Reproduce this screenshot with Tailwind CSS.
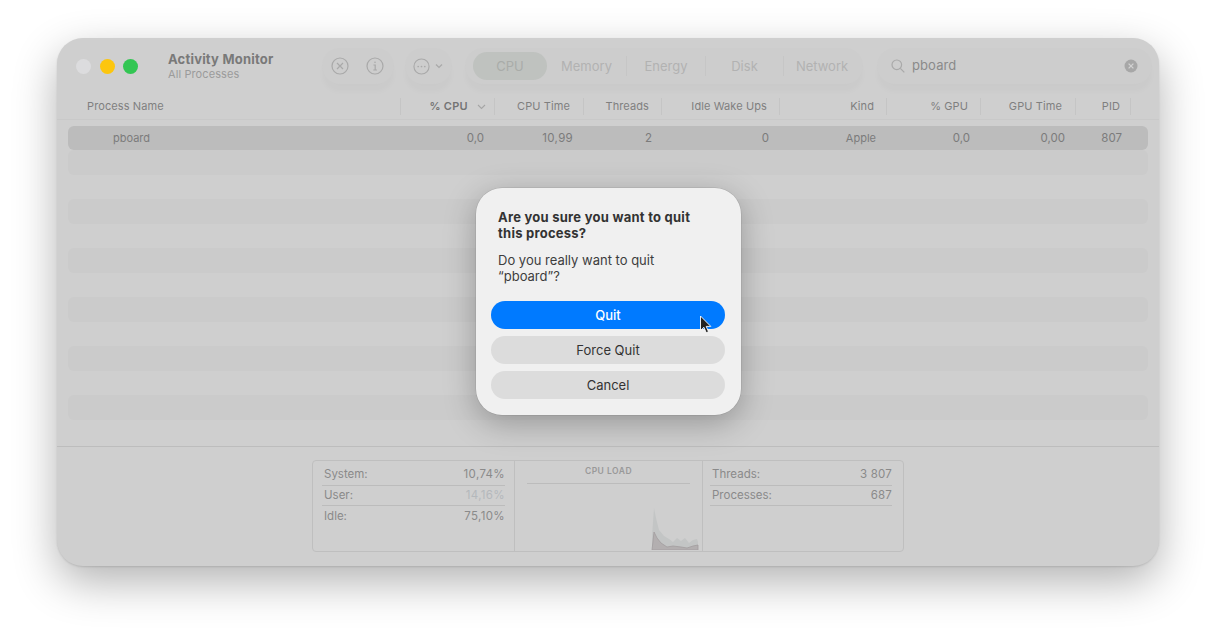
<!DOCTYPE html>
<html lang="en">
<head>
  <meta charset="UTF-8" />
  <title>Activity Monitor</title>
  <script src="https://cdn.jsdelivr.net/npm/@tailwindcss/browser@4"></script>
</head>
<body class="bg-white h-[641px] overflow-hidden font-['Inter',sans-serif] antialiased">
  <div class="relative ml-[57px] mt-[38px] w-[1102px] h-[528px] rounded-[26px] bg-[#cfcfcf] flex flex-col shadow-[0_1px_2px_rgba(0,0,0,0.12),0_16px_44px_rgba(0,0,0,0.3)]">

    <!-- Toolbar -->
    <div class="h-[56px] flex items-center pl-[19px] pr-[7px]">
      <div class="flex gap-[8.5px] w-[92px]">
        <span class="w-[15px] h-[15px] rounded-full bg-[#dcdcde]"></span>
        <span class="w-[15px] h-[15px] rounded-full bg-[#fcc60e]"></span>
        <span class="w-[15px] h-[15px] rounded-full bg-[#33c653]"></span>
      </div>
      <div class="w-[154px]">
        <div class="text-[13px] leading-[15px] font-bold text-[#797979] tracking-[0.2px]">Activity Monitor</div>
        <div class="text-[11px] leading-[14px] text-[#9b9b9b] tracking-[0.1px]">All Processes</div>
      </div>
      <div class="w-[72px] h-[36px] rounded-[18px] bg-[#cdcdcd] shadow-[0_8px_5px_rgba(0,0,0,0.02)] flex items-center justify-center gap-[17px] pr-[2px]">
        <svg width="18" height="18" viewBox="0 0 18 18" fill="none" stroke="#a9a9a9" stroke-width="1.2"><circle cx="9" cy="9" r="8"/><path d="M6 6l6 6M12 6l-6 6"/></svg>
        <svg width="18" height="18" viewBox="0 0 18 18" fill="none" stroke="#a9a9a9" stroke-width="1.2"><circle cx="9" cy="9" r="8"/><path d="M7.5 8h1.7v5M7.3 13h3.6"/><circle cx="9" cy="5.3" r="0.8" fill="#a9a9a9" stroke="none"/></svg>
      </div>
      <div class="w-[47px] h-[36px] ml-[11px] rounded-[18px] bg-[#cdcdcd] shadow-[0_8px_5px_rgba(0,0,0,0.02)] flex items-center justify-center gap-[5px] pr-[2px]">
        <svg width="17" height="17" viewBox="0 0 18 18" fill="none" stroke="#a9a9a9" stroke-width="1.2"><circle cx="9" cy="9" r="8"/><circle cx="5.5" cy="9" r="0.9" fill="#a9a9a9" stroke="none"/><circle cx="9" cy="9" r="0.9" fill="#a9a9a9" stroke="none"/><circle cx="12.5" cy="9" r="0.9" fill="#a9a9a9" stroke="none"/></svg>
        <svg width="8" height="6" viewBox="0 0 8 6" fill="none" stroke="#a9a9a9" stroke-width="1.2"><path d="M1 1.5l3 3 3-3"/></svg>
      </div>
      <div class="w-[398px] h-[36px] ml-[13px] rounded-[18px] bg-[#cdcdcd] shadow-[0_8px_5px_rgba(0,0,0,0.02)] flex items-center pl-[8px] text-[13px] leading-[20px] text-[#b2b2b2]">
        <span class="w-[74px] h-[28px] rounded-[14px] bg-[#bfc2bf] flex items-center justify-center text-[#a9aca9]">CPU</span>
        <span class="w-[80px] flex justify-center border-r border-[#c6c6c6]">Memory</span>
        <span class="w-[79px] flex justify-center border-r border-[#c6c6c6]">Energy</span>
        <span class="w-[78px] flex justify-center border-r border-[#c6c6c6]">Disk</span>
        <span class="w-[76px] flex justify-center">Network</span>
      </div>
      <div class="w-[275px] h-[36px] ml-[14px] rounded-[18px] bg-[#cdcdcd] shadow-[0_8px_5px_rgba(0,0,0,0.02)] flex items-center pl-[14px] pr-[14px] text-[13px] text-[#8a8a8a]">
        <svg width="14" height="14" viewBox="0 0 14 14" fill="none" stroke="#a9a9a9" stroke-width="1.2"><circle cx="5.8" cy="5.8" r="4.8"/><path d="M9.3 9.3l4 4"/></svg>
        <span class="ml-[7px] flex-1 tracking-[0.1px]">pboard</span>
        <svg width="14" height="14" viewBox="0 0 14 14"><circle cx="7" cy="7" r="6.5" fill="#a7a7a7"/><path d="M4.6 4.6l4.8 4.8M9.4 4.6l-4.8 4.8" stroke="#d2d2d2" stroke-width="1.3"/></svg>
      </div>
    </div>

    <!-- Column headers -->
    <div class="h-[26px] pl-[11px] flex items-center text-[11px] text-[#7f7f7f] tracking-[0.1px] border-b border-[#c9c9c9]">
      <div class="w-[333px] pl-[19px] border-r border-[#c5c5c5] leading-[17px]">Process Name</div>
      <div class="w-[94px] pr-[8px] border-r border-[#c5c5c5] leading-[17px] flex justify-end items-center gap-[9px]"><span class="font-semibold text-[#747474] tracking-[0.3px]">% CPU</span><svg width="9" height="6" viewBox="0 0 9 6" fill="none" stroke="#a5a5a5" stroke-width="1.1"><path d="M1 1l3.5 3.5L8 1"/></svg></div>
      <div class="w-[89px] pr-[13px] border-r border-[#c5c5c5] leading-[17px] text-right">CPU Time</div>
      <div class="w-[78px] pr-[12px] border-r border-[#c5c5c5] leading-[17px] text-right">Threads</div>
      <div class="w-[118px] pr-[12px] border-r border-[#c5c5c5] leading-[17px] text-right">Idle Wake Ups</div>
      <div class="w-[107px] pr-[12px] border-r border-[#c5c5c5] leading-[17px] text-right">Kind</div>
      <div class="w-[94px] pr-[12px] border-r border-[#c5c5c5] leading-[17px] text-right">% GPU</div>
      <div class="w-[95px] pr-[13px] border-r border-[#c5c5c5] leading-[17px] text-right">GPU Time</div>
      <div class="w-[55px] pr-[10px] border-r border-[#c5c5c5] leading-[17px] text-right">PID</div>
    </div>

    <!-- Rows -->
    <div class="flex-1 px-[11px] pt-[5.5px] flex flex-col">
      <div class="h-[24.5px] shrink-0 rounded-[6px] bg-[#bcbcbc] flex items-center pt-[1px] text-[11.5px] text-[#7b7b7b]">
        <div class="w-[333px] pl-[45px] text-[11px]">pboard</div>
        <div class="w-[94px] pr-[11px] text-right">0,0</div>
        <div class="w-[89px] pr-[11px] text-right tracking-[0.3px]">10,99</div>
        <div class="w-[78px] pr-[10px] text-right">2</div>
        <div class="w-[118px] pr-[11px] text-right">0</div>
        <div class="w-[107px] pr-[11px] text-right text-[11px]">Apple</div>
        <div class="w-[94px] pr-[11px] text-right">0,0</div>
        <div class="w-[95px] pr-[11px] text-right">0,00</div>
        <div class="w-[55px] pr-[9px] text-right">807</div>
      </div>
      <div class="h-[24.5px] shrink-0 rounded-[6px] bg-[#cbcbcb]"></div>
      <div class="h-[24.5px] shrink-0"></div>
      <div class="h-[24.5px] shrink-0 rounded-[6px] bg-[#cbcbcb]"></div>
      <div class="h-[24.5px] shrink-0"></div>
      <div class="h-[24.5px] shrink-0 rounded-[6px] bg-[#cbcbcb]"></div>
      <div class="h-[24.5px] shrink-0"></div>
      <div class="h-[24.5px] shrink-0 rounded-[6px] bg-[#cbcbcb]"></div>
      <div class="h-[24.5px] shrink-0"></div>
      <div class="h-[24.5px] shrink-0 rounded-[6px] bg-[#cbcbcb]"></div>
      <div class="h-[24.5px] shrink-0"></div>
      <div class="h-[24.5px] shrink-0 rounded-[6px] bg-[#cbcbcb]"></div>
    </div>

    <!-- Stats footer -->
    <div class="h-[120px] border-t border-[#bdbdbd] flex justify-center pt-[13px] rounded-b-[26px]">
      <div class="w-[592px] h-[92px] rounded-[4px] border border-[#bfbfbf] flex text-[11.5px] text-[#8a8a8a]">
        <div class="w-[202px] pl-[9px] pr-[9px] pt-[4px] border-r border-[#bfbfbf]">
          <div class="h-[20.5px] pl-[2px] flex justify-between items-center border-b border-[#bcbcbc]"><span>System:</span><span class="tracking-[0.35px]">10,74%</span></div>
          <div class="h-[20.5px] pl-[2px] flex justify-between items-center border-b border-[#bcbcbc]"><span>User:</span><span class="tracking-[0.35px] text-[#b4b8bc]">14,16%</span></div>
          <div class="h-[20.5px] pl-[2px] flex justify-between items-center"><span>Idle:</span><span class="tracking-[0.35px]">75,10%</span></div>
        </div>
        <div class="w-[188px] flex flex-col border-r border-[#bfbfbf]">
          <div class="mx-[12px] h-[23px] border-b border-[#bcbcbc] text-center text-[8.5px] leading-[20px] font-semibold tracking-[0.5px] text-[#999999]">CPU LOAD</div>
          <div class="flex-1 flex items-end justify-end pr-[3px] pb-[1px]">
            <svg width="48" height="44" viewBox="0 0 48 44">
              <path d="M1 44V30L3 2L5 12L8 24L13 30L18 33L22 36L26 32L30 35L34 32L38 37L42 34L46 33L47 36V44Z" fill="#c3c5c5"/>
              <path d="M1 44L3 26L6 32L10 37L16 41L22 40L30 41L36 42L42 40L47 39V44Z" fill="#b3afb0" stroke="#a29d9e" stroke-width="0.8"/>
            </svg>
          </div>
        </div>
        <div class="flex-1 pl-[7px] pr-[11px] pt-[4px]">
          <div class="h-[20.5px] pl-[2px] flex justify-between items-center border-b border-[#bcbcbc]"><span>Threads:</span><span class="tracking-[0.2px]">3 807</span></div>
          <div class="h-[20.5px] pl-[2px] flex justify-between items-center border-b border-[#bcbcbc]"><span>Processes:</span><span class="tracking-[0.2px]">687</span></div>
        </div>
      </div>
    </div>

    <!-- Quit dialog -->
    <div class="absolute left-[419px] top-[150px] w-[265px] h-[227px] rounded-[26px] bg-[#f0f0f0] pl-[15px] pr-[16px] pt-[21px] shadow-[0_0_0_0.5px_rgba(0,0,0,0.12),0_8px_32px_rgba(0,0,0,0.28)]">
      <div class="pl-[7px] text-[13px] leading-[16px] font-bold text-[#333333] tracking-[0.25px]">Are you sure you want to quit<br>this process?</div>
      <div class="pl-[7px] mt-[11px] text-[13px] leading-[16px] text-[#3d3d3d]">Do you really want to quit<br>“pboard”?</div>
      <div class="mt-[17px] flex flex-col gap-[7px] text-[13px] text-center">
        <div class="h-[28px] leading-[28px] rounded-[14px] bg-[#007aff] text-white font-medium">Quit</div>
        <div class="h-[28px] leading-[28px] rounded-[14px] bg-[#dcdcdc] text-[#333333]">Force Quit</div>
        <div class="h-[28px] leading-[28px] rounded-[14px] bg-[#dcdcdc] text-[#333333]">Cancel</div>
      </div>
    </div>

    <!-- Pointer -->
    <svg class="absolute left-[642px] top-[277px]" width="13" height="20" viewBox="0 0 13 20">
      <path d="M1.5 1v14.5l3.4-3.2 2.3 5.4 2.3-1-2.3-5.3h4.6Z" fill="#222222" stroke="#ffffff" stroke-width="0.9" stroke-linejoin="round"/>
    </svg>
  </div>
</body>
</html>
